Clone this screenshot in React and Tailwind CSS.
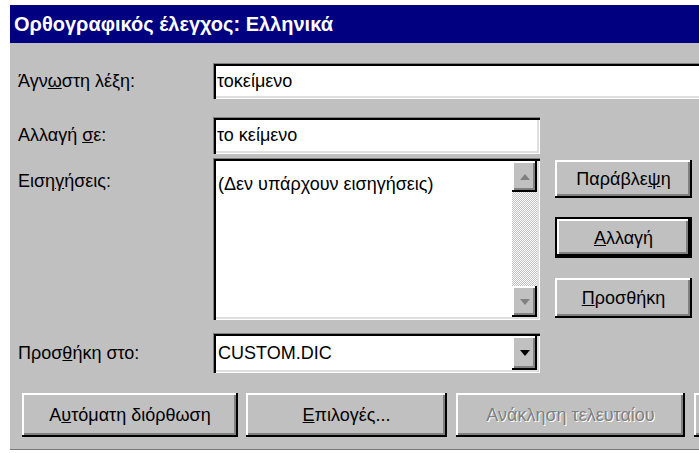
import React from "react";

const font = { fontFamily: '"Liberation Sans", Arial, sans-serif' };

const sunken =
  "bg-white shadow-[inset_1px_1px_0_#808080,inset_3px_3px_0_#000,inset_-1px_-1px_0_#fff,inset_-3px_-3px_0_#dfdfdf]";
const raised =
  "bg-[#c0c0c0] shadow-[inset_-2px_-2px_0_#000,inset_2px_2px_0_#fff,inset_-4px_-4px_0_#808080]";

function Btn({ children, className = "", isDefault = false, disabled = false }) {
  return (
    <div
      className={`${isDefault ? "border-2 border-black" : ""} ${className} flex`}
    >
      <div
        className={`${raised} flex-1 flex items-center justify-center text-[18px] leading-none ${
          disabled ? "text-[#808080] [text-shadow:1px_1px_0_#fff]" : "text-black"
        }`}
      >
        {children}
      </div>
    </div>
  );
}

function Arrow({ down = false, color = "#808080" }) {
  return (
    <svg width="12" height="8" viewBox="0 0 12 8">
      {down ? (
        <polygon points="1,1 11,1 6,7" fill={color} />
      ) : (
        <polygon points="1,7 11,7 6,1" fill={color} />
      )}
    </svg>
  );
}

export default function App() {
  return (
    <div className="min-h-screen bg-white pt-[5px] pl-[10px]" style={font}>
      <div className="bg-[#c0c0c0] w-[689px] h-[445px] flex flex-col overflow-hidden border-b border-[#7a7a7a]">
        {/* title bar */}
        <div className="h-[38px] bg-[#000080] flex items-center pl-[4px]">
          <span className="text-white font-bold text-[20px]">
            Ορθογραφικός έλεγχος: Ελληνικά
          </span>
        </div>

        {/* unknown word */}
        <div className="flex items-center mt-[20px]">
          <div className="w-[203px] shrink-0 pl-[8px] text-[18px]">
            Άγν<u>ω</u>στη λέξη:
          </div>
          <div className={`${sunken} h-[36px] w-[520px] shrink-0 flex items-center pl-[4px] text-[18px]`}>
            τοκείμενο
          </div>
        </div>

        {/* change to */}
        <div className="flex items-center mt-[18px]">
          <div className="w-[203px] shrink-0 pl-[8px] text-[18px]">
            Αλλαγή <u>σ</u>ε:
          </div>
          <div className={`${sunken} h-[37px] w-[327px] flex items-center pl-[4px] text-[18px]`}>
            το κείμενο
          </div>
        </div>

        {/* suggestions */}
        <div className="flex mt-[4px]">
          <div className="w-[203px] shrink-0 pl-[8px] pt-[10px] text-[18px]">
            Ειση<u>γ</u>ήσεις:
          </div>
          <div className={`${sunken} h-[162px] w-[327px] shrink-0 flex p-[3px]`}>
            <div className="flex-1 pl-[2px] pt-[10px] text-[18px]">(Δεν υπάρχουν εισηγήσεις)</div>
            <div className="w-[25px] flex flex-col bg-[repeating-conic-gradient(#fff_0_25%,#c0c0c0_0_50%)] bg-[length:2px_2px]">
              <div className={`${raised} h-[31px] flex items-center justify-center`}>
                <Arrow />
              </div>
              <div className="flex-1" />
              <div className={`${raised} h-[31px] flex items-center justify-center`}>
                <Arrow down />
              </div>
            </div>
          </div>
          <div className="ml-[15px] w-[137px] shrink-0 flex flex-col pt-[2px]">
            <Btn className="h-[38px]">
              Παράβλε<u>ψ</u>η
            </Btn>
            <Btn isDefault className="h-[41px] mt-[19px]">
              <u>Α</u>λλαγή
            </Btn>
            <Btn className="h-[40px] mt-[20px]">
              <u>Π</u>ροσθήκη
            </Btn>
          </div>
        </div>

        {/* dictionary */}
        <div className="flex items-center mt-[13px]">
          <div className="w-[203px] shrink-0 pl-[8px] text-[18px]">
            Προσ<u>θ</u>ήκη στο:
          </div>
          <div className={`${sunken} h-[40px] w-[327px] flex items-center p-[3px]`}>
            <div className="flex-1 pl-[2px] text-[18px]">CUSTOM.DIC</div>
            <div className={`${raised} w-[25px] h-full flex items-center justify-center`}>
              <Arrow down color="#000" />
            </div>
          </div>
        </div>

        {/* bottom buttons */}
        <div className="flex mt-[20px] pl-[12px] gap-[8px]">
          <Btn className="h-[44px] w-[216px] shrink-0">
            Α<u>υ</u>τόματη διόρθωση
          </Btn>
          <Btn className="h-[44px] w-[201px] shrink-0">
            <u>Ε</u>πιλογές...
          </Btn>
          <Btn disabled className="h-[44px] w-[229px] shrink-0 ml-[1px]">
            Ανάκληση τελευταίου
          </Btn>
          <Btn className="h-[44px] w-[120px] shrink-0 ml-[1px]" />
        </div>
      </div>
    </div>
  );
}
